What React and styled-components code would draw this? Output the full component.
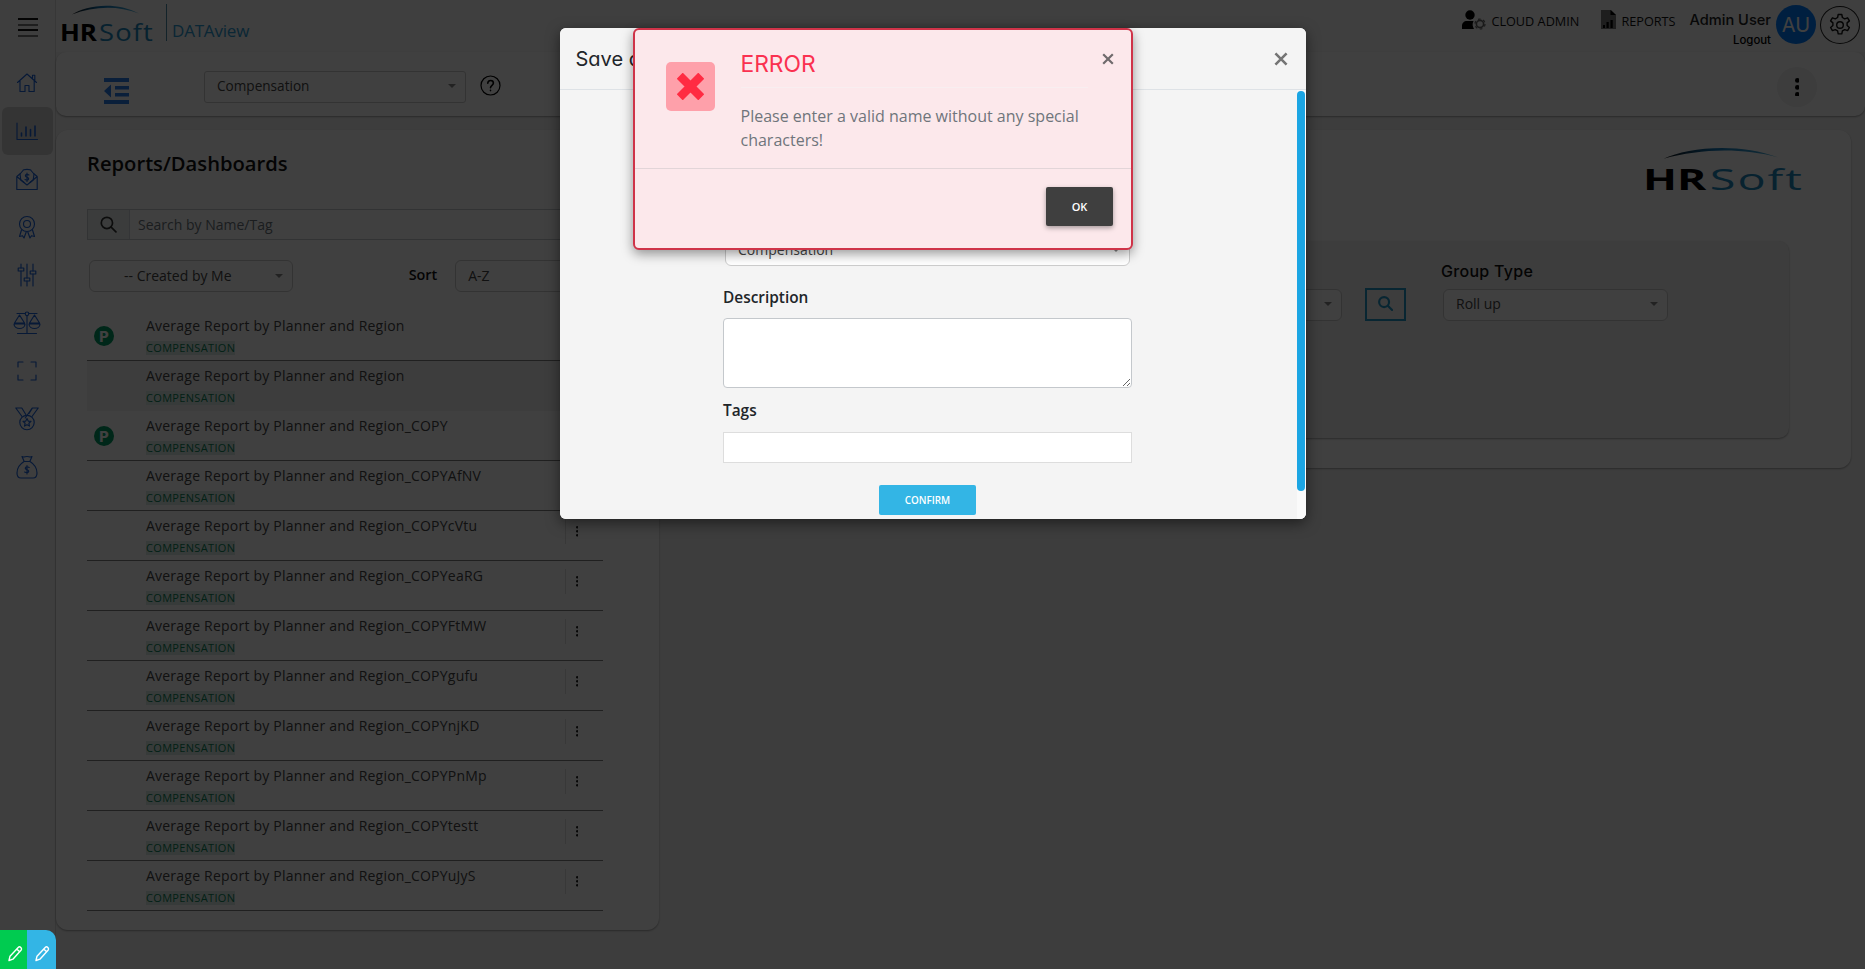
import React from "react";
import styled, { createGlobalStyle, css } from "styled-components";

const Global = createGlobalStyle`
  *, *::before, *::after { box-sizing: border-box; }
  body { margin: 0; background: #f4f4f4; font-family: "Open Sans", sans-serif; color: #212529; }
  button, textarea, input { font-family: inherit; margin: 0; }
  svg { display: block; flex: none; }
`;

const display = css`
  font-family: Inter, sans-serif;
  font-feature-settings: "cv11" 1;
`;

const Page = styled.div`
  position: relative;
  display: flex;
  width: 100%;
  height: 969px;
  overflow: hidden;
`;

/* ---------- side navigation ---------- */
const Sidebar = styled.nav`
  flex: none;
  width: 56px;
  height: 100%;
  border-right: 1px solid #dcdcdc;
  background: #f7f7f7;
`;
const MenuToggle = styled.div`
  display: flex;
  flex-direction: column;
  gap: 3.5px;
  height: 59px;
  padding: 18px 0 0 18px;
`;
const MenuLine = styled.span`
  width: 20px;
  height: 2px;
  background: ${(p) => (p.$soft ? "#777" : "#111")};
`;
const NavItem = styled.div`
  display: flex;
  align-items: center;
  justify-content: center;
  width: 51px;
  height: 48px;
  margin-left: 2px;
  padding-right: 2px;
  border-radius: 6px;
  color: #1c63d8;
  background: ${(p) => (p.$active ? "#d0d0d0" : "transparent")};
`;

/* ---------- top bar ---------- */
const Main = styled.div`
  flex: 1;
  min-width: 0;
  display: flex;
  flex-direction: column;
`;
const Header = styled.header`
  display: flex;
  justify-content: space-between;
  height: 52px;
  padding: 0 5px 0 4px;
  background: #f9f9f9;
`;
const Brand = styled.div`
  display: flex;
  padding-top: 4px;
`;
const BrandDivider = styled.span`
  width: 1px;
  height: 37px;
  margin: 0 5px 0 12px;
  background: #4c8aa8;
`;
const Product = styled.span`
  padding-top: 14px;
  font-size: 17px;
  line-height: 26px;
  letter-spacing: -0.2px;
  color: #2d9bd3;
`;
const UserBar = styled.div`
  display: flex;
  align-items: flex-start;
`;
const HeaderLink = styled.div`
  display: flex;
  align-items: center;
  height: 24px;
  margin: 8px ${(p) => p.$after}px 0 0;
  gap: ${(p) => p.$gap}px;
  font-size: 12.7px;
  color: #111;
  svg { margin-bottom: 1px; }
  span { padding-top: 1px; }
`;
const UserName = styled.div`
  ${display}
  padding-top: 10px;
  text-align: right;
  font-size: 14.6px;
  font-weight: 500;
  line-height: 20px;
  color: #222;
`;
const Logout = styled.div`
  font-size: 11.4px;
  line-height: 20px;
  color: #000;
`;
const Avatar = styled.div`
  ${display}
  display: flex;
  align-items: center;
  justify-content: center;
  width: 40px;
  height: 39px;
  margin: 5px 4px 0 5px;
  border-radius: 50%;
  background: #007bff;
  color: #fff;
  font-size: 20px;
`;
const GearButton = styled.div`
  display: flex;
  align-items: center;
  justify-content: center;
  width: 40px;
  height: 38px;
  margin-top: 6px;
  border: 1px solid #222;
  border-radius: 50%;
  color: #111;
`;

/* ---------- toolbar ---------- */
const surface = css`
  background: #fff;
  box-shadow: 0 1px 2px rgba(0, 0, 0, 0.35);
`;
const Toolbar = styled.div`
  ${surface}
  display: flex;
  align-items: flex-start;
  height: 64px;
  padding: 0 48px 0 48px;
  border-radius: 10px;
`;
const IndentIcon = styled.div`
  padding-top: 26px;
  color: #2a7be8;
`;
const HelpIcon = styled.div`
  padding: 23px 0 0 14px;
  color: #000;
`;
const KebabButton = styled.div`
  display: flex;
  align-items: center;
  justify-content: center;
  width: 40px;
  height: 40px;
  margin: 15px 0 0 auto;
  border-radius: 50%;
  background: #f1f1f1;
  color: #000;
`;
const SelectBox = styled.div`
  display: flex;
  align-items: center;
  justify-content: space-between;
  width: ${(p) => p.$width}px;
  height: 32px;
  margin: ${(p) => p.$margin || "0"};
  padding: 0 9px ${(p) => p.$base ?? 2}px ${(p) => p.$indent || 12}px;
  border: 1px solid #ccc;
  border-radius: ${(p) => p.$radius ?? 6}px;
  background: #fff;
  font-size: ${(p) => p.$size || 14}px;
  line-height: 20px;
  color: #444;
`;
const Caret = styled.span`
  border: 4px solid transparent;
  border-top: 4px solid #888;
  border-bottom: 0;
`;

/* ---------- content ---------- */
const Content = styled.div`
  display: flex;
  align-items: flex-start;
  gap: 9px;
  padding: 14px 14px 0 0;
`;
const ListPanel = styled.section`
  ${surface}
  width: 603px;
  height: 800px;
  padding: 19px 56px 0 31px;
  border-radius: 12px;
`;
const PanelTitle = styled.h1`
  margin: 0 0 32px;
  font-size: 20.2px;
  font-weight: 600;
  line-height: 28px;
  color: #111;
`;
const SearchField = styled.div`
  display: flex;
  height: 31px;
  border: 1px solid #c8ccd0;
  font-size: 14px;
  color: #6c757d;
`;
const SearchAddon = styled.span`
  display: flex;
  align-items: center;
  justify-content: center;
  width: 42px;
  background: #e9efee;
  border-right: 1px solid #ced4da;
  color: #333;
`;
const SearchText = styled.span`
  padding-left: 8px;
  line-height: 29px;
`;
const Filters = styled.div`
  display: flex;
  align-items: center;
  height: 32px;
  margin: 20px 0 19px 2px;
`;
const SortLabel = styled.span`
  margin: 0 18px 4px 116px;
  font-size: 14.4px;
  font-weight: 600;
  color: #111;
`;
const ReportRow = styled.div`
  display: flex;
  height: 50px;
  border-bottom: 1px solid ${(p) => (p.$hover ? "transparent" : "#808080")};
  background: ${(p) => (p.$hover ? "#f3f3f3" : "transparent")};
`;
const RowStatus = styled.div`
  width: 59px;
  padding: 15px 0 0 7px;
`;
const PublishedBadge = styled.span`
  ${display}
  display: flex;
  align-items: center;
  justify-content: center;
  width: 20px;
  height: 20px;
  border-radius: 50%;
  background: #009a63;
  color: #fff;
  font-size: 14.5px;
  font-weight: 800;
`;
const RowText = styled.div`
  flex: 1;
  padding-top: 5px;
`;
const ReportName = styled.div`
  font-size: 14px;
  line-height: 20px;
  letter-spacing: 0.22px;
  color: #444;
`;
const Tag = styled.span`
  display: table;
  margin-top: 5px;
  font-size: 11px;
  line-height: 14px;
  letter-spacing: 0.33px;
  color: #0a8258;
  background: #dcece6;
`;
const RowMenu = styled.div`
  display: flex;
  align-items: center;
  width: 38px;
  height: 25px;
  margin-top: 8px;
  padding-left: 10px;
  border-left: 1px solid #ddd;
  color: #222;
`;

const Preview = styled.section`
  ${surface}
  flex: 1;
  height: 338px;
  padding: 16px 62px 0 60px;
  border-radius: 12px;
`;
const PreviewLogo = styled.div`
  display: flex;
  justify-content: flex-end;
  margin-right: -15px;
`;
const FilterCard = styled.div`
  display: flex;
  height: 197px;
  margin-top: 39px;
  padding: 16px 121px 0 0;
  justify-content: flex-end;
  border-radius: 10px;
  background: #f1f1f1;
  box-shadow: 0 1px 2px rgba(0, 0, 0, 0.35);
`;
const LookupButton = styled.div`
  display: flex;
  align-items: center;
  justify-content: center;
  width: 41px;
  height: 33px;
  margin: 31px 37px 0 23px;
  padding-bottom: 2px;
  border: 2px solid #2196c8;
  color: #2196c8;
`;
const GroupLabel = styled.div`
  ${display}
  margin: 4px 0 8px -2px;
  font-size: 16px;
  font-weight: 500;
  letter-spacing: 0.3px;
  line-height: 20px;
  color: #111;
`;

/* ---------- overlays ---------- */
const Backdrop = styled.div`
  position: absolute;
  inset: 0;
  background: rgba(0, 0, 0, 0.75);
`;
const Modal = styled.div`
  position: absolute;
  left: 560px;
  top: 28px;
  width: 746px;
  height: 491px;
  overflow: hidden;
  border-radius: 6px;
  background: #f4f4f4;
`;
const ModalShadow = styled(Modal)`
  overflow: visible;
  box-shadow: 0 4px 14px rgba(0, 0, 0, 0.5);
`;
const ModalHeader = styled.div`
  ${display}
  display: flex;
  align-items: center;
  justify-content: space-between;
  height: 62px;
  padding: 0 18px 0 15.5px;
  border-bottom: 1px solid #dee2e6;
  font-size: 20px;
  color: #212529;
`;
const ModalClose = styled.div`
  color: #757575;
`;
const ModalBody = styled.div`
  display: flex;
  justify-content: space-between;
  height: 429px;
`;
const Form = styled.div`
  display: flex;
  flex-direction: column;
  width: 409px;
  margin-left: 163px;
  padding-top: 144px;
`;
const FieldLabel = styled.label`
  margin: ${(p) => p.$margin};
  font-size: 15.4px;
  font-weight: 600;
  line-height: 22px;
`;
const DescriptionInput = styled.textarea`
  width: 409px;
  height: 70px;
  border: 1px solid #c4c8cc;
  border-radius: 4px;
  background: #fff;
  resize: vertical;
`;
const TagsInput = styled.div`
  height: 31px;
  border: 1px solid #ddd;
  background: #fff;
`;
const ConfirmButton = styled.button`
  align-self: center;
  width: 97px;
  height: 30px;
  margin-top: 22px;
  padding: 0;
  border: 0;
  border-radius: 2px;
  background: #33b5e5;
  color: #fff;
  font-size: 9.9px;
  font-weight: 600;
`;
const ScrollTrack = styled.div`
  width: 9px;
  height: 100%;
  padding: 1px 1px 0 0;
  background: #fafafa;
`;
const ScrollThumb = styled.div`
  width: 8px;
  height: 400px;
  border-radius: 4px;
  background: #1ba5e3;
`;

const Alert = styled.div`
  position: absolute;
  left: 633px;
  top: 28px;
  width: 500px;
  height: 222px;
  border: 2px solid #cf3348;
  border-radius: 6px;
  background: #fce8eb;
  box-shadow: 0 4px 12px rgba(0, 0, 0, 0.4);
`;
const AlertBody = styled.div`
  display: flex;
  height: 139px;
  padding: 18px 17px 0 31px;
  border-bottom: 1px solid #e2d5d8;
`;
const AlertIcon = styled.div`
  display: flex;
  align-items: center;
  justify-content: center;
  width: 49px;
  height: 49px;
  margin: 14px 25.5px 0 0;
  border-radius: 5px;
  background: #fea0aa;
  color: #ff2b42;
`;
const AlertText = styled.div`
  width: 347px;
`;
const AlertTitle = styled.div`
  ${display}
  height: 40px;
  border-bottom: 1px solid #f8eef0;
  font-size: 22.8px;
  line-height: 32px;
  color: #fa3150;
`;
const AlertMessage = styled.p`
  margin: 16px 0 0;
  font-size: 16px;
  line-height: 24px;
  color: #6f757b;
`;
const AlertClose = styled.div`
  margin: 5px 0 0 auto;
  color: #6f6a6c;
`;
const OkButton = styled.button`
  display: block;
  width: 67px;
  height: 39px;
  margin: 18px 18px 0 auto;
  padding: 0;
  border: 0;
  border-radius: 2px;
  background: #3f3f3f;
  box-shadow: 0 2px 5px rgba(0, 0, 0, 0.35);
  color: #fff;
  font-size: 11px;
  font-weight: 600;
`;

const EditDock = styled.div`
  position: absolute;
  left: 0;
  bottom: 0;
  display: flex;
`;
const EditTab = styled.div`
  display: flex;
  width: ${(p) => p.$width}px;
  height: 39px;
  padding: 15px 0 0 ${(p) => p.$indent}px;
  border-radius: 0 ${(p) => p.$radius}px 0 0;
  background: ${(p) => p.$color};
  color: #fff;
`;

/* ---------- drawings ---------- */
const Line = ({ w = 24, h = 24, box = "0 0 24 24", sw = 1.15, children }) => (
  <svg width={w} height={h} viewBox={box} fill="none" stroke="currentColor" strokeWidth={sw} strokeLinecap="round" strokeLinejoin="round">
    {children}
  </svg>
);

const Logo = ({ width, height, id }) => (
  <svg width={width} height={height} viewBox="0 0 94 46" preserveAspectRatio="none">
    <defs>
      <linearGradient id={id} x1="0" x2="1">
        <stop offset="0" stopColor="#111" />
        <stop offset=".45" stopColor="#1277b8" />
        <stop offset="1" stopColor="#4fb4dd" />
      </linearGradient>
    </defs>
    <path d="M12 10.500C26 1 56-3 79 9.500C57 1 33 2.500 12 10.500Z" fill={`url(#${id})`} />
    <text x="0" y="36.500" fontFamily="Open Sans, sans-serif" fontSize="23.500" fontWeight="700" fill="#000" textLength="37" lengthAdjust="spacingAndGlyphs">HR</text>
    <text x="39" y="36.500" fontFamily="Open Sans, sans-serif" fontSize="23.500" fontWeight="400" letterSpacing="1" fill="#1d86bd" textLength="55" lengthAdjust="spacingAndGlyphs">Soft</text>
  </svg>
);

const HomeIcon = () => (
  <Line><path d="M2.500 11.500 12 3l9.500 8.500M17.500 7.500V4.200h2.300v5M5 10v10.500h5v-6h4v6h5.200V10" /></Line>
);
const ChartIcon = () => (
  <Line><path d="M2 4v16.500h20.500" /><path d="M6.500 17v-3M11 17V8M15.500 17V10.500M20 17V7" strokeWidth="1.600" /></Line>
);
const MailMoneyIcon = () => (
  <Line>
    <path d="M5.500 6.500 1.800 9.500v13h20.400v-13l-3.700-3M1.800 9.500 9 15.500M22.200 9.500 15 15.500" />
    <path d="M8 3.500c0-1.600 8-1.600 8 0l3 3.500-.8 6L12 18l-6.200-5L5 7z" />
    <path d="M14 8c-3.500-2-5 1.500-2 2.200s1.500 4.300-2 2.300M12 6v8.500" />
  </Line>
);
const AwardIcon = () => (
  <Line><circle cx="12" cy="9" r="7.500" /><circle cx="12" cy="9" r="3.500" /><path d="m6.500 15-2 6.500 3-.8 1.500 2.300 2.200-6M17.500 15l2 6.500-3-.8-1.500 2.300-2.200-6" /></Line>
);
const SlidersIcon = () => (
  <Line><path d="M6 1v4M6 8v15M12 1v14M12 18v5M18 1v7M18 11v12" /><path d="M3.200 5h5.600v3H3.200zM9.200 15h5.600v3H9.200zM15.200 8h5.600v3h-5.600z" /></Line>
);
const ScalesIcon = () => (
  <Line w={28} box="0 0 28 24">
    <path d="M4 2.500h8M16 2.500h8M14 4.500V22M4.500 22.500h19" /><circle cx="14" cy="2.800" r="1.800" />
    <path d="M6.500 4 1.500 12h10zM21.500 4l-5 8h10zM1 13h11c0 6-11 6-11 0zM16 13h11c0 6-11 6-11 0z" />
  </Line>
);
const FrameIcon = () => (
  <Line><path d="M8 3H3v5M16 3h5v5M8 21H3v-5M16 21h5v-5" /></Line>
);
const MedalIcon = () => (
  <Line>
    <path d="M.8 1h6l4 6.500M.8 1 7 9.500M23.200 1h-6l-7 10M23.200 1 17 9.500M17.500 1 14 6.500" />
    <circle cx="12" cy="15.500" r="7.200" /><path d="m12 11.500 1.200 2.600 2.800.3-2.100 1.900.6 2.800-2.500-1.400-2.500 1.400.6-2.800L8 14.400l2.800-.3z" />
  </Line>
);
const MoneyBagIcon = () => (
  <Line>
    <path d="M7 1.500c2 1.200 3 0 5 0s3 1.200 5 0l-2.200 5H9.200zM9 6.500c-4 2.500-7 7-7 11.500 0 3.500 1.500 5 4 5h12c2.500 0 4-1.500 4-5 0-4.500-3-9-7-11.500" />
    <path d="M14.200 12.500c-3.800-2-5.400 1.200-2.200 2.200s1.600 4.200-2.400 2.300M12 10.500V19" />
  </Line>
);
const Dots = ({ r, gap }) => (
  <svg width={r * 2} height={gap * 2 + r * 2} fill="currentColor">
    {[0, 1, 2].map((i) => <circle key={i} cx={r} cy={r + i * gap} r={r} />)}
  </svg>
);
const Magnifier = ({ size, sw }) => (
  <Line w={size} h={size} box="0 0 16 16" sw={sw}><circle cx="6.500" cy="6.500" r="5.300" /><path d="m10.500 10.500 4.500 4.500" /></Line>
);
const Cross = ({ size, sw }) => (
  <svg width={size} height={size} viewBox="0 0 12 12" stroke="currentColor" strokeWidth={sw}><path d="m1.200 1.200 9.600 9.600M10.800 1.200l-9.600 9.600" /></svg>
);
const Pencil = () => (
  <Line w={15} h={17} box="0 0 15 17" sw={1.4}><path d="M1 15.500 2 11.200 10.200 2.400Q11.500 1.200 12.800 2.500T13 5.200L4.900 14.200zM8.700 4l2.900 2.700" /></Line>
);

const navIcons = [HomeIcon, ChartIcon, MailMoneyIcon, AwardIcon, SlidersIcon, ScalesIcon, FrameIcon, MedalIcon, MoneyBagIcon];
const suffixes = ["", "", "_COPY", "_COPYAfNV", "_COPYcVtu", "_COPYeaRG", "_COPYFtMW", "_COPYgufu", "_COPYnjKD", "_COPYPnMp", "_COPYtestt", "_COPYuJyS"];

const Select = ({ children, ...props }) => (
  <SelectBox {...props}><span>{children}</span><Caret /></SelectBox>
);

export default function App() {
  return (
    <Page>
      <Global />
      <Sidebar>
        <MenuToggle><MenuLine /><MenuLine $soft /><MenuLine /><MenuLine $soft /></MenuToggle>
        {navIcons.map((Icon, i) => <NavItem key={i} $active={i === 1}><Icon /></NavItem>)}
      </Sidebar>

      <Main>
        <Header>
          <Brand>
            <Logo width={94} height={46} id="arcTop" />
            <BrandDivider />
            <Product>DATAview</Product>
          </Brand>
          <UserBar>
            <HeaderLink $gap={5} $after={22}>
              <svg width="24" height="20" viewBox="0 0 24 20">
                <circle cx="8" cy="5" r="4.700" fill="#000" />
                <path d="M0 19v-3c0-3 2-5 5-5h6.500c-1.500 3-1 5.500.5 8z" fill="#000" />
                <circle cx="18" cy="14" r="3.600" fill="none" stroke="#666" strokeWidth="1.600" />
                <circle cx="18" cy="14" r="5" fill="none" stroke="#666" strokeWidth="1.200" strokeDasharray="2.600 2.640" />
              </svg>
              <span>CLOUD ADMIN</span>
            </HeaderLink>
            <HeaderLink $gap={5} $after={14}>
              <svg width="15" height="19" viewBox="0 0 15 19">
                <path d="M0 0h10l5 5v14H0z" fill="#777" /><path d="M9.500 0v5H15z" fill="#000" />
                <path d="M2 15h2v3H2zM5.500 12h2.200v6H5.500zM9.500 10h2.200v8H9.500z" fill="#000" />
              </svg>
              <span>REPORTS</span>
            </HeaderLink>
            <UserName>Admin User<Logout>Logout</Logout></UserName>
            <Avatar>AU</Avatar>
            <GearButton>
              <Line w={24} h={24} sw={1.400}>
                <circle cx="12" cy="12" r="3.300" />
                <path d="M10.200 1.500h3.600l.6 3 2.300 1.300 2.900-1 1.800 3.100-2.300 2v2.600l2.300 2-1.800 3.100-2.900-1-2.300 1.300-.6 3h-3.600l-.6-3-2.300-1.300-2.900 1-1.800-3.100 2.300-2V9.900l-2.300-2 1.800-3.100 2.900 1 2.300-1.300z" />
              </Line>
            </GearButton>
          </UserBar>
        </Header>

        <Toolbar>
          <IndentIcon>
            <svg width="25" height="26" fill="currentColor"><path d="M0 0h25v4H0zM11 8h14v3.500H11zM11 15h14v3.500H11zM0 22h25v4H0zM0 13 7 6.500v13z" /></svg>
          </IndentIcon>
          <Select $width={262} $radius={3} $margin="19px 0 0 75px" $size={13.6}>Compensation</Select>
          <HelpIcon>
            <Line w={21} h={21} box="0 0 21 21" sw={1.200}><circle cx="10.500" cy="10.500" r="9.500" /><path d="M7.800 8.300c0-3.800 5.600-3.500 5.600-.2 0 2.200-2.900 2.200-2.900 4.600M10.500 15.300v.3" strokeWidth="1.600" /></Line>
          </HelpIcon>
          <KebabButton><Dots r={2.4} gap={7} /></KebabButton>
        </Toolbar>

        <Content>
          <ListPanel>
            <PanelTitle>Reports/Dashboards</PanelTitle>
            <SearchField>
              <SearchAddon><Magnifier size={17} sw={1.6} /></SearchAddon>
              <SearchText>Search by Name/Tag</SearchText>
            </SearchField>
            <Filters>
              <Select $width={204} $indent={34} $base={0}>-- Created by Me</Select>
              <SortLabel>Sort</SortLabel>
              <Select $width={148} $base={0}>A-Z</Select>
            </Filters>
            {suffixes.map((suffix, i) => (
              <ReportRow key={i} $hover={i === 1}>
                <RowStatus>{(i === 0 || i === 2) && <PublishedBadge>P</PublishedBadge>}</RowStatus>
                <RowText>
                  <ReportName>Average Report by Planner and Region{suffix}</ReportName>
                  <Tag>COMPENSATION</Tag>
                </RowText>
                <RowMenu><Dots r={1.2} gap={4} /></RowMenu>
              </ReportRow>
            ))}
          </ListPanel>

          <Preview>
            <PreviewLogo><Logo width={161} height={56} id="arcCard" /></PreviewLogo>
            <FilterCard>
              <Select $width={200} $margin="32px 0 0" />
              <LookupButton><Magnifier size={15} sw={2.3} /></LookupButton>
              <div>
                <GroupLabel>Group Type</GroupLabel>
                <Select $width={225}>Roll up</Select>
              </div>
            </FilterCard>
          </Preview>
        </Content>
      </Main>

      <Backdrop />
      <ModalShadow />
      <Modal>
        <ModalHeader><span>Save as</span><ModalClose><Cross size={14} sw={2.2} /></ModalClose></ModalHeader>
        <ModalBody>
          <Form>
            <Select $width={405} $margin="0 0 0 2px" $base={0}>Compensation</Select>
            <FieldLabel $margin="21px 0 9px">Description</FieldLabel>
            <DescriptionInput />
            <FieldLabel $margin="12px 0 10px">Tags</FieldLabel>
            <TagsInput />
            <ConfirmButton>CONFIRM</ConfirmButton>
          </Form>
          <ScrollTrack><ScrollThumb /></ScrollTrack>
        </ModalBody>
      </Modal>

      <Alert>
        <AlertBody>
          <AlertIcon><Cross size={27} sw={3.8} /></AlertIcon>
          <AlertText>
            <AlertTitle>ERROR</AlertTitle>
            <AlertMessage>Please enter a valid name without any special characters!</AlertMessage>
          </AlertText>
          <AlertClose><Cross size={12} sw={2.2} /></AlertClose>
        </AlertBody>
        <OkButton>OK</OkButton>
      </Alert>

      <EditDock>
        <EditTab $width={27} $indent={8} $radius={0} $color="#00cb50"><Pencil /></EditTab>
        <EditTab $width={29} $indent={8} $radius={10} $color="#33b5e5"><Pencil /></EditTab>
      </EditDock>
    </Page>
  );
}
